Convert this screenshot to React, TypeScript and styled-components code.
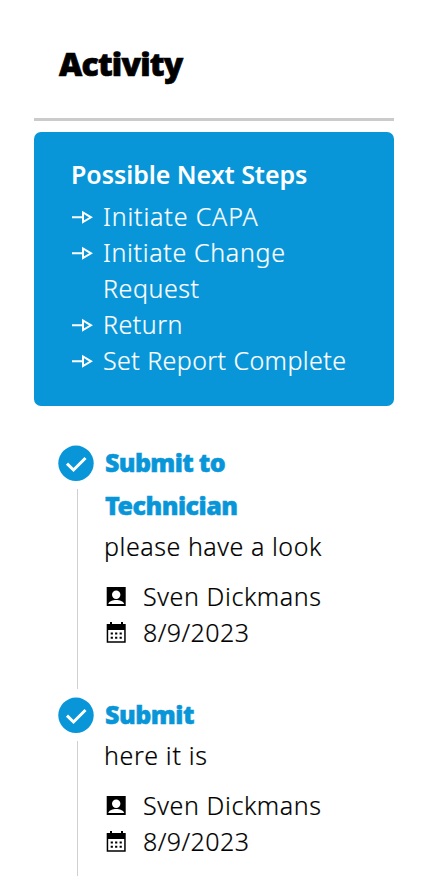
import React from "react";
import styled, { createGlobalStyle } from "styled-components";

const BLUE = "#0896d9";

const GlobalStyle = createGlobalStyle`
  *, *::before, *::after { box-sizing: border-box; }
  html, body { margin: 0; height: 100%; overflow: hidden; }
  body {
    background: #fff;
    color: #000;
    font-family: "Noto Sans", "Open Sans", sans-serif;
    font-size: 25px;
    font-weight: 300;
    line-height: 36px;
  }
`;

const Panel = styled.main`
  width: 428px;
  padding: 0 34px;
`;

const Header = styled.header`
  height: 121px;
  padding: 42px 25px 0;
  border-bottom: 3px solid #cbcbcb;
`;

const Title = styled.h1`
  margin: 0;
  font-size: 32px;
  font-weight: 900;
  line-height: 44px;
  letter-spacing: -0.8px;
  -webkit-text-stroke: 0.7px currentColor;
`;

const StepsCard = styled.section`
  margin-top: 11px;
  height: 274px;
  padding: 24px 37px 27px;
  border-radius: 7px;
  background: ${BLUE};
  color: #fff;
`;

const StepsTitle = styled.h2`
  margin: 0 0 6px;
  font-size: 25px;
  font-weight: 600;
  line-height: 36px;
  white-space: nowrap;
  letter-spacing: -0.06px;
`;

const StepList = styled.ul`
  margin: 0;
  padding: 0;
  list-style: none;
`;

const Step = styled.li`
  display: flex;
  gap: 10px;
`;

const StepIcon = styled.svg`
  flex: none;
  width: 22px;
  height: 36px;
`;

const Label = styled.span<{ $spacing: number }>`
  display: block;
  white-space: pre;
  letter-spacing: ${(p) => p.$spacing}px;
`;

const BodyLabel = styled(Label)`
  -webkit-text-stroke: 0.2px currentColor;
`;

const Timeline = styled.ol`
  margin: 35px 0 0;
  padding: 0 0 0 24px;
  list-style: none;
`;

const Entry = styled.li`
  display: flex;
  gap: 10px;
  min-height: 209px;
`;

const Rail = styled.div`
  display: flex;
  flex-direction: column;
  align-items: center;
  width: 36px;
  padding: 4px 0;
`;

const Badge = styled.svg`
  flex: none;
  width: 36px;
  height: 36px;
  margin-bottom: 8px;
`;

const Connector = styled.div`
  flex: 1;
  width: 1px;
  margin-left: 2px;
  background: #d0d0d0;
`;

const Details = styled.div`
  padding-bottom: 43px;
`;

const EntryTitle = styled.h3`
  margin: 0;
  padding-left: 1px;
  font-size: 25px;
  font-weight: 900;
  line-height: 43px;
  color: ${BLUE};
  -webkit-text-stroke: 0.5px currentColor;
`;

const Comment = styled.p`
  margin: 1px 0 14px;
`;

const MetaRow = styled.div`
  display: flex;
  align-items: center;
  gap: 17px;
  height: 36px;
`;

const MetaIcon = styled.svg`
  flex: none;
  width: 22px;
  height: 22px;
`;

const ArrowIcon = () => (
  <StepIcon viewBox="0 0 22 36" fill="none" stroke="#fff" strokeWidth="2">
    <path d="M1 19.3H12M12 14.5V24.1L20 19.3Z" />
  </StepIcon>
);

const CheckBadge = () => (
  <Badge viewBox="0 0 36 36">
    <circle cx="18" cy="18.3" r="17.7" fill={BLUE} />
    <path d="M9 18.7L15.5 25L27.5 13" fill="none" stroke="#fff" strokeWidth="3" />
  </Badge>
);

const PersonIcon = () => (
  <MetaIcon viewBox="0 0 22 22">
    <path d="M2.7 2H21.7V21H2.7Z" fill="#000" />
    <circle cx="12.2" cy="9.8" r="4.2" fill="#fff" />
    <path d="M4.2 19C5.2 16 8.7 15 12.2 15S19.2 16 20.2 19Z" fill="#fff" />
  </MetaIcon>
);

const CalendarIcon = () => (
  <MetaIcon viewBox="0 0 22 22">
    <path d="M2.7 3H6V1H8V3H17V1H19V3H21.7V21.7H2.7ZM4.2 9V20.3H20.2V9Z" fill="#000" fillRule="evenodd" />
    <path
      d="M6.7 11.5H8.9V13.5H6.7ZM11.1 11.5H13.3V13.5H11.1ZM15.6 11.5H17.8V13.5H15.6ZM6.7 15.7H8.9V17.7H6.7ZM11.1 15.7H13.3V17.7H11.1ZM15.6 15.7H17.8V17.7H15.6Z"
      fill="#000"
    />
  </MetaIcon>
);

type Line = { text: string; spacing: number };

const steps: Line[][] = [
  [{ text: "Initiate CAPA", spacing: 0.85 }],
  [
    { text: "Initiate Change", spacing: 0.67 },
    { text: "Request", spacing: 0.55 },
  ],
  [{ text: "Return", spacing: 0.5 }],
  [{ text: "Set Report Complete", spacing: 0.42 }],
];

const entries: { title: Line[]; comment: Line; person: Line; date: Line }[] = [
  {
    title: [
      { text: "Submit to", spacing: -0.65 },
      { text: "Technician", spacing: -0.5 },
    ],
    comment: { text: "please have a look", spacing: 0.55 },
    person: { text: "Sven Dickmans", spacing: 0.6 },
    date: { text: "8/9/2023", spacing: 0.42 },
  },
  {
    title: [{ text: "Submit", spacing: -0.5 }],
    comment: { text: "here it is", spacing: 0.7 },
    person: { text: "Sven Dickmans", spacing: 0.6 },
    date: { text: "8/9/2023", spacing: 0.42 },
  },
];

const BodyLine = ({ text, spacing }: Line) => <BodyLabel $spacing={spacing}>{text}</BodyLabel>;

export default function App() {
  return (
    <>
      <GlobalStyle />
      <Panel>
        <Header>
          <Title>Activity</Title>
        </Header>
        <StepsCard>
          <StepsTitle>Possible Next Steps</StepsTitle>
          <StepList>
            {steps.map((lines) => (
              <Step key={lines[0].text}>
                <ArrowIcon />
                <div>
                  {lines.map((line) => (
                    <BodyLine key={line.text} {...line} />
                  ))}
                </div>
              </Step>
            ))}
          </StepList>
        </StepsCard>
        <Timeline>
          {entries.map((entry) => (
            <Entry key={entry.title[0].text}>
              <Rail>
                <CheckBadge />
                <Connector />
              </Rail>
              <Details>
                <EntryTitle>
                  {entry.title.map((line) => (
                    <Label key={line.text} $spacing={line.spacing}>
                      {line.text}
                    </Label>
                  ))}
                </EntryTitle>
                <Comment>
                  <BodyLine {...entry.comment} />
                </Comment>
                <MetaRow>
                  <PersonIcon />
                  <BodyLine {...entry.person} />
                </MetaRow>
                <MetaRow>
                  <CalendarIcon />
                  <BodyLine {...entry.date} />
                </MetaRow>
              </Details>
            </Entry>
          ))}
        </Timeline>
      </Panel>
    </>
  );
}
